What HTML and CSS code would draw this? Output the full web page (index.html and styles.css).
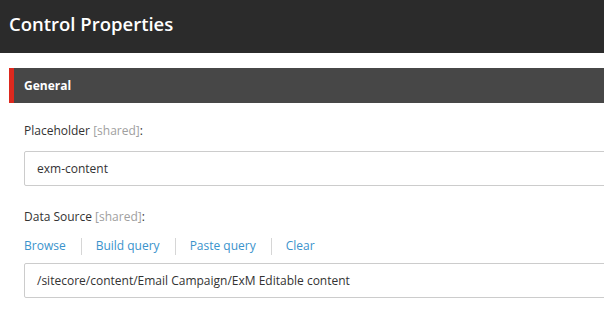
FILE: index.html
```html
<!DOCTYPE html>
<html>
<head>
<meta charset="utf-8">
<link rel="stylesheet" href="styles.css">
</head>
<body>
<div class="page">
  <header class="topbar">
    <h1 class="title">Control Properties</h1>
  </header>
  <section class="section">
    <div class="section-head">General</div>
    <div class="section-body">
      <div class="field">
        <div class="label">Placeholder <span class="muted">[shared]</span>:</div>
        <div class="input">exm-content</div>
      </div>
      <div class="field field-second">
        <div class="label">Data Source <span class="muted">[shared]</span>:</div>
        <div class="actions">
          <a class="action">Browse</a>
          <span class="sep"></span>
          <a class="action">Build query</a>
          <span class="sep"></span>
          <a class="action">Paste query</a>
          <span class="sep"></span>
          <a class="action">Clear</a>
        </div>
        <div class="input input-second">/sitecore/content/Email Campaign/ExM Editable content</div>
      </div>
    </div>
  </section>
</div>
</body>
</html>
```
FILE: styles.css
```css
html, body {
  margin: 0;
  padding: 0;
  background: #ffffff;
  overflow: hidden;
}
body {
  font-family: "Open Sans", "Noto Sans", sans-serif;
  color: #333333;
}
.page {
  width: 604px;
  height: 310px;
  overflow: hidden;
}
.topbar {
  height: 53px;
  background: #2b2b2b;
  box-sizing: border-box;
  padding: 12px 0 0 9px;
}
.title {
  margin: 0;
  font-size: 18.5px;
  line-height: 24px;
  font-weight: 600;
  color: #ffffff;
}
.section {
  margin-top: 15px;
  margin-left: 9px;
}
.section-head {
  height: 35px;
  line-height: 35px;
  background: #474747;
  border-left: 5px solid #dc291e;
  padding-left: 10px;
  font-size: 12px;
  font-weight: 700;
  color: #ffffff;
}
.section-body {
  padding: 19px 0 0 15px;
}
.label {
  font-size: 12px;
  line-height: 18px;
  color: #333333;
  margin-bottom: 11px;
}
.muted {
  color: #a0a0a0;
}
.input {
  width: 640px;
  height: 35px;
  box-sizing: border-box;
  border: 1px solid #cccccc;
  border-radius: 2px;
  padding-left: 12px;
  font-size: 12px;
  line-height: 34px;
  color: #333333;
}
.field-second {
  margin-top: 22px;
}
.field-second .label {
  margin-bottom: 11px;
}
.actions {
  display: flex;
  align-items: center;
  height: 18px;
  margin-bottom: 8px;
}
.action {
  font-size: 12px;
  line-height: 18px;
  color: #3a93cc;
}
.sep {
  width: 1px;
  height: 17px;
  background: #d6d6d6;
  margin: 0 14px 0 15px;
}
```
